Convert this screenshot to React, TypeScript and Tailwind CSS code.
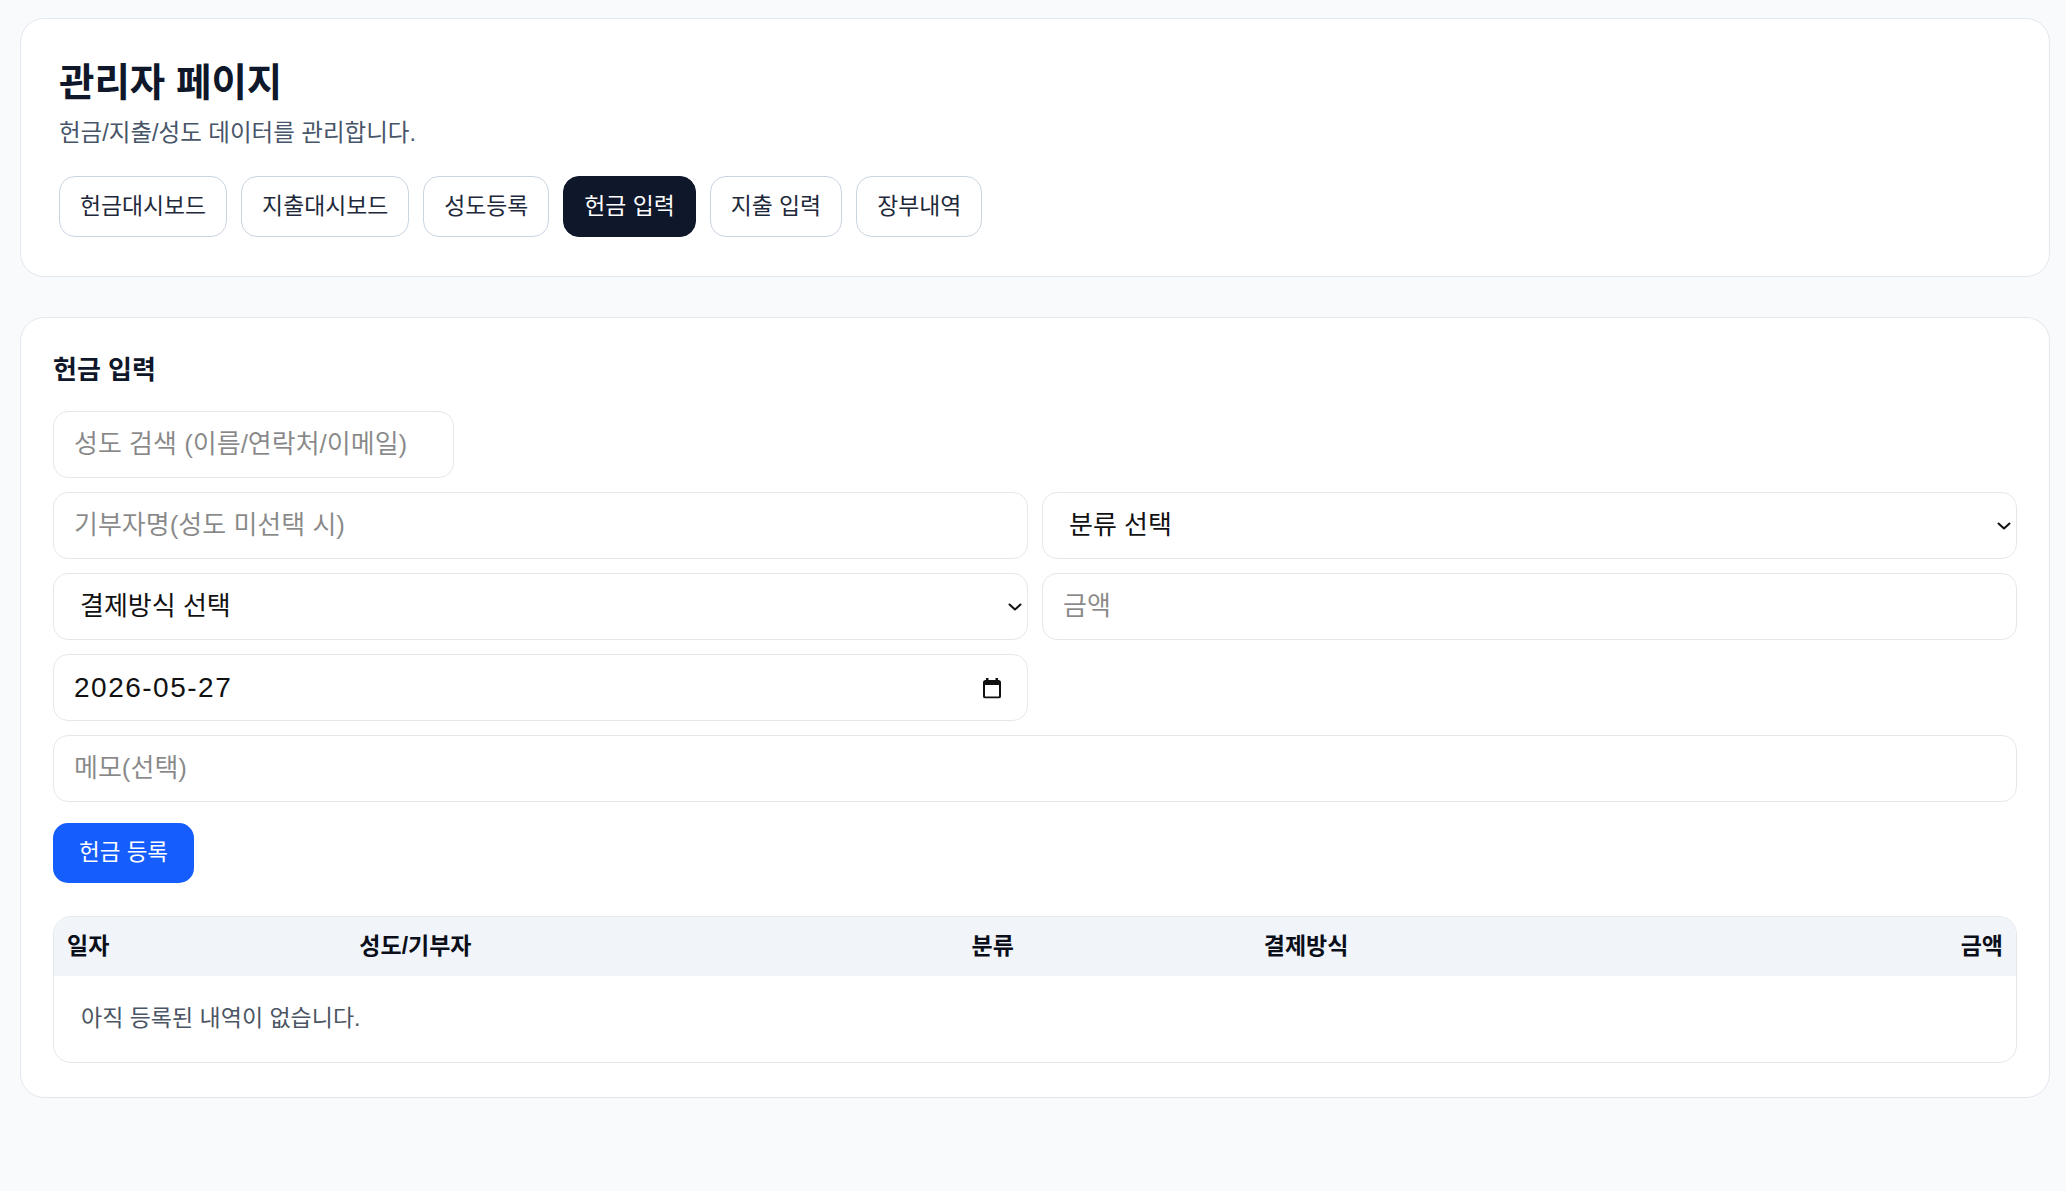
import React from 'react';

const tabs = ['헌금대시보드', '지출대시보드', '성도등록', '헌금 입력', '지출 입력', '장부내역'];
const activeTab = '헌금 입력';

const columns = [
  { label: '일자', className: 'w-[14.9%] text-left' },
  { label: '성도/기부자', className: 'w-[31.2%] text-left' },
  { label: '분류', className: 'w-[14.9%] text-left' },
  { label: '결제방식', className: 'w-[24.2%] text-left' },
  { label: '금액', className: 'w-[14.8%] text-right' },
];

const fieldClass =
  'h-[67px] w-full rounded-[15px] border border-[#e5e7eb] bg-white px-[20px] text-[26px] text-[#111111] outline-none';

const Chevron: React.FC = () => (
  <svg
    width="14"
    height="8"
    viewBox="0 0 14 8"
    fill="none"
    className="pointer-events-none absolute right-[6px] top-1/2 -translate-y-1/2"
  >
    <path d="M1.5 1.5L7 6.5L12.5 1.5" stroke="#111111" strokeWidth="2" strokeLinecap="round" strokeLinejoin="round" />
  </svg>
);

const CalendarIcon: React.FC = () => (
  <svg
    width="18"
    height="21"
    viewBox="0 0 18 21"
    fill="none"
    className="pointer-events-none absolute right-[27px] top-1/2 -translate-y-1/2"
  >
    <rect x="3" y="0.5" width="2.5" height="4" fill="#111111" />
    <rect x="12.5" y="0.5" width="2.5" height="4" fill="#111111" />
    <rect x="1" y="3.5" width="16" height="16.5" rx="1.5" stroke="#111111" strokeWidth="2" />
    <rect x="1" y="3.5" width="16" height="4" fill="#111111" />
  </svg>
);

const SelectField: React.FC<{ placeholder: string; options: string[] }> = ({ placeholder, options }) => (
  <div className="relative">
    <select defaultValue="" className={`${fieldClass} appearance-none pl-[26px]`}>
      <option value="">{placeholder}</option>
      {options.map((opt) => (
        <option key={opt} value={opt}>
          {opt}
        </option>
      ))}
    </select>
    <Chevron />
  </div>
);

export default function App() {
  return (
    <div className="min-h-screen bg-[#f8fafc] pb-10 pl-[20px] pr-[16px] pt-[18px] font-['Liberation_Sans','Noto_Sans_CJK_KR',sans-serif]">
      {/* Page header */}
      <div className="rounded-3xl border border-[#e2e8f0] bg-white pb-[39px] pl-[38px] pr-9 pt-[37px]">
        <h1 className="text-[38.5px] font-bold leading-[54px] text-[#0f172a]">관리자 페이지</h1>
        <p className="mt-[8px] text-[23.5px] leading-[31px] text-[#475569]">헌금/지출/성도 데이터를 관리합니다.</p>
        <div className="mt-[27px] flex flex-wrap gap-[14px]">
          {tabs.map((tab) => (
            <button
              key={tab}
              className={
                tab === activeTab
                  ? 'h-[61px] rounded-[16px] border border-[#0f172a] bg-[#0f172a] px-[20px] text-[22.85px] text-white'
                  : 'h-[61px] rounded-[16px] border border-[#cbd5e1] bg-white px-[20px] text-[22.85px] text-[#1e293b]'
              }
            >
              {tab}
            </button>
          ))}
        </div>
      </div>

      {/* Offering entry */}
      <div className="mt-[40px] rounded-3xl border border-[#e2e8f0] bg-white px-8 pb-[34px] pt-8">
        <h2 className="text-[26px] font-bold leading-[40px] text-[#0f172a]">헌금 입력</h2>

        <input className={`${fieldClass} mt-[21px] !w-[401px]`} placeholder="성도 검색 (이름/연락처/이메일)" />

        <div className="mt-[14px] grid grid-cols-2 gap-[14px]">
          <input className={fieldClass} placeholder="기부자명(성도 미선택 시)" />
          <SelectField placeholder="분류 선택" options={['주일헌금', '십일조', '감사헌금', '선교헌금']} />
          <SelectField placeholder="결제방식 선택" options={['현금', '계좌이체', '카드']} />
          <input className={fieldClass} placeholder="금액" inputMode="numeric" />
          <div className="relative">
            <input className={`${fieldClass} !text-[28px] tracking-[1.5px]`} defaultValue="2026-05-27" />
            <CalendarIcon />
          </div>
          <div />
          <input className={`${fieldClass} col-span-2`} placeholder="메모(선택)" />
        </div>

        <button className="mt-[21px] h-[60px] rounded-[15px] bg-[#155dfc] px-[26px] text-[22.5px] text-white">
          헌금 등록
        </button>

        <div className="mt-[33px] overflow-hidden rounded-[18px] border border-[#e5e7eb]">
          <table className="w-full table-fixed">
            <thead className="bg-[#f1f5f9]">
              <tr>
                {columns.map((col) => (
                  <th
                    key={col.label}
                    className={`${col.className} px-[13px] py-[14px] text-[23px] font-bold leading-[31px] text-[#0b0f19]`}
                  >
                    {col.label}
                  </th>
                ))}
              </tr>
            </thead>
            <tbody>
              <tr>
                <td colSpan={5} className="px-[27px] pb-[28px] pt-[27px] text-[23px] leading-[31px] text-[#4b5563]">
                  아직 등록된 내역이 없습니다.
                </td>
              </tr>
            </tbody>
          </table>
        </div>
      </div>
    </div>
  );
}
